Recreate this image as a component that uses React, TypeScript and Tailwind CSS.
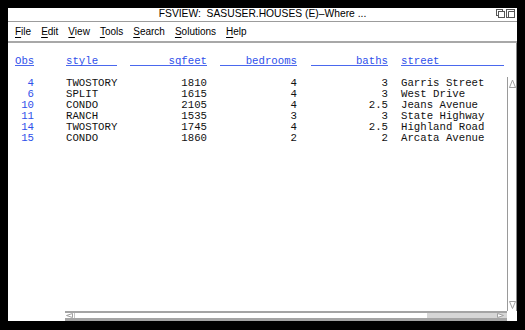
import React from "react";

const rows: string[][] = [
  ["4", "TWOSTORY", "1810", "4", "3", "Garris Street"],
  ["6", "SPLIT", "1615", "4", "3", "West Drive"],
  ["10", "CONDO", "2105", "4", "2.5", "Jeans Avenue"],
  ["11", "RANCH", "1535", "3", "3", "State Highway"],
  ["14", "TWOSTORY", "1745", "4", "2.5", "Highland Road"],
  ["15", "CONDO", "1860", "2", "2", "Arcata Avenue"],
];

const mono = { fontFamily: '"Liberation Mono", "DejaVu Sans Mono", monospace' };

function MenuItem({ label }: { label: string }) {
  return (
    <span>
      <span className="underline decoration-1 underline-offset-[2px]">{label[0]}</span>
      {label.slice(1)}
    </span>
  );
}

export default function App() {
  return (
    <div className="w-[525px] h-[330px] bg-black pt-2 pl-2 overflow-hidden">
      <div className="w-[509px] h-[313px] bg-white flex flex-col">
        {/* title bar */}
        <div className="h-[14px] border-b border-[#9c9c9c] relative flex items-center justify-center">
          <span
            className="text-[10.3px] leading-none text-black whitespace-pre"
            style={{ fontFamily: '"Liberation Sans", Arial, sans-serif' }}
          >
            FSVIEW:  SASUSER.HOUSES (E)–Where ...
          </span>
          <div className="absolute right-[2px] top-[1px] flex gap-[1px]">
            <svg width="9" height="9" viewBox="0 0 9 9">
              <rect x="0.5" y="0.5" width="6" height="6" fill="white" stroke="#555" />
              <rect x="2.5" y="2.5" width="6" height="6" fill="white" stroke="#555" />
            </svg>
            <svg width="9" height="9" viewBox="0 0 9 9">
              <rect x="0.5" y="0.5" width="8" height="8" fill="white" stroke="#555" />
              <path d="M2.5 8.5 V2.5 H8.5" fill="none" stroke="#555" />
            </svg>
          </div>
        </div>
        {/* menu bar */}
        <div
          className="h-[21px] border-b-2 border-[#a8a8a8] flex items-center gap-[10px] pl-[7px] text-[10px] text-black"
          style={{ fontFamily: '"Liberation Sans", Arial, sans-serif' }}
        >
          {["File", "Edit", "View", "Tools", "Search", "Solutions", "Help"].map((m) => (
            <MenuItem key={m} label={m} />
          ))}
        </div>
        {/* body */}
        <div className="flex-1 flex flex-row border-r border-[#8a8a8a]">
          <div className="flex-1 pl-[7px] pt-[13px] text-[10.7px]" style={mono}>
            <div className="flex text-[#2f50ea]">
              <div className="w-[19px] h-[10px] border-b border-[#4a68ee] leading-[11px]">Obs</div>
              <div className="w-[51px] ml-[32px] h-[10px] border-b border-[#4a68ee] leading-[11px]">style</div>
              <div className="w-[77px] ml-[13px] h-[10px] border-b border-[#4a68ee] leading-[11px] text-right">sqfeet</div>
              <div className="w-[77px] ml-[13px] h-[10px] border-b border-[#4a68ee] leading-[11px] text-right">bedrooms</div>
              <div className="w-[77px] ml-[14px] h-[10px] border-b border-[#4a68ee] leading-[11px] text-right">baths</div>
              <div className="w-[103px] ml-[13px] h-[10px] border-b border-[#4a68ee] leading-[11px]">street</div>
            </div>
            <div className="mt-[12px]">
              {rows.map((r) => (
                <div key={r[0]} className="flex leading-[11.1px] h-[11.1px] whitespace-pre text-[#111]">
                  <div className="w-[19px] text-right text-[#2f50ea]">{r[0]}</div>
                  <div className="w-[51px] ml-[32px]">{r[1]}</div>
                  <div className="w-[77px] ml-[13px] text-right">{r[2]}</div>
                  <div className="w-[77px] ml-[13px] text-right">{r[3]}</div>
                  <div className="w-[77px] ml-[14px] text-right">{r[4]}</div>
                  <div className="w-[103px] ml-[13px]">{r[5]}</div>
                </div>
              ))}
            </div>
          </div>
          {/* vertical scrollbar column */}
          <div className="w-[9px] flex flex-col">
            <div className="h-[34px]" />
            <div className="flex-1 border-l border-[#9a9a9a] flex flex-col justify-between items-center pt-[2px] pb-[2px]">
              <svg width="7" height="9" viewBox="0 0 7 9">
                <path d="M0.5 8.5 L3.5 1 L6.5 8.5 Z" fill="white" stroke="#a0a0a0" />
                <path d="M0.5 8.5 H6.5" stroke="#a0a0a0" />
              </svg>
              <svg width="7" height="8" viewBox="0 0 7 8">
                <path d="M0.5 0.5 H6.5 L3.5 7.5 Z" fill="white" stroke="#a0a0a0" />
              </svg>
            </div>
          </div>
        </div>
        {/* bottom: horizontal scrollbar */}
        <div className="h-[10px] flex flex-row">
          <div className="w-[57px]" />
          <div className="flex-1 flex flex-row border-t-2 border-b-[3px] border-[#a4a4a4]">
            <div className="w-[10px] flex items-center justify-center border-r border-[#c4c4c4]">
              <svg width="7" height="5" viewBox="0 0 7 5">
                <path d="M6.5 0.5 L0.5 2.5 L6.5 4.5 Z" fill="white" stroke="#a0a0a0" />
              </svg>
            </div>
            <div className="w-[352px] bg-white" />
            <div className="flex-1 bg-[#d6d6d6] flex items-center justify-end pr-[3px]">
              <svg width="7" height="5" viewBox="0 0 7 5">
                <path d="M0.5 0.5 L6.5 2.5 L0.5 4.5 Z" fill="white" stroke="#a0a0a0" />
              </svg>
            </div>
          </div>
          <div className="w-[10px] bg-white" />
        </div>
      </div>
    </div>
  );
}
